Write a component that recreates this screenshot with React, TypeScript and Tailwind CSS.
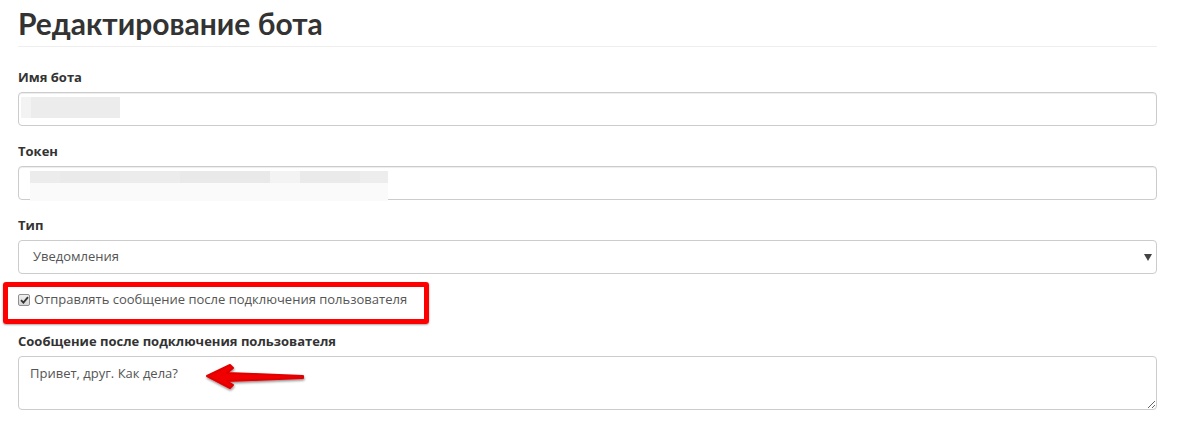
export default function App() {
  return (
    <div className="min-h-screen bg-white pl-[18px] pr-[21px] font-['Open_Sans',sans-serif] text-[#333]">
      {/* Header */}
      <h1 className="border-b border-[#eee] pt-[7px] pb-[6px] font-['Lato',sans-serif] text-[30px] font-bold leading-[33px] text-[#333]">
        Редактирование бота
      </h1>

      {/* Bot name */}
      <div className="mt-[20px] mb-[15px]">
        <label className="mb-[5px] block text-[13px] font-bold leading-[20px]">Имя бота</label>
        <div className="relative h-[34px] rounded-[4px] border border-[#ccc] shadow-[inset_0_1px_1px_rgba(0,0,0,0.075)]">
          <div className="absolute left-[2px] top-[4px] flex h-[21px]">
            <div className="w-[10px] bg-[#f3f3f3]"></div>
            <div className="w-[89px] bg-[#ececec]"></div>
          </div>
        </div>
      </div>

      {/* Token */}
      <div className="mb-[15px]">
        <label className="mb-[5px] block text-[13px] font-bold leading-[20px]">Токен</label>
        <div className="relative h-[34px] rounded-[4px] border border-[#ccc] shadow-[inset_0_1px_1px_rgba(0,0,0,0.075)]">
          <div className="absolute left-[11px] top-[4px] w-[358px]">
            <div className="flex h-[12px]">
              <div className="w-[30px] bg-[#ececec]"></div>
              <div className="w-[60px] bg-[#eaeaea]"></div>
              <div className="w-[60px] bg-[#ececec]"></div>
              <div className="w-[90px] bg-[#e9e9e9]"></div>
              <div className="w-[30px] bg-[#f3f3f3]"></div>
              <div className="w-[60px] bg-[#eaeaea]"></div>
              <div className="w-[28px] bg-[#ededed]"></div>
            </div>
            <div className="h-[18px] bg-[#fafafa]"></div>
          </div>
        </div>
      </div>

      {/* Type */}
      <div className="mb-[15px]">
        <label className="mb-[5px] block text-[13px] font-bold leading-[20px]">Тип</label>
        <div className="flex h-[34px] items-center justify-between rounded-[4px] border border-[#ccc] pl-[14px] pr-[4px] text-[13px] text-[#555]">
          <span>Уведомления</span>
          <svg width="8" height="7" viewBox="0 0 8 7" className="mt-[1px]">
            <polygon points="0,0 8,0 4,7" fill="#444" />
          </svg>
        </div>
      </div>

      {/* Checkbox with annotation box */}
      <div className="relative mb-[20px] flex h-[22px] items-center">
        <div className="pointer-events-none absolute left-[-15px] top-[-7px] h-[42px] w-[426px] rounded-[3px] border-[5px] border-[#ff0000] shadow-[0_1px_2px_rgba(0,0,0,0.35)]"></div>
        <span className="mr-[4px] flex h-[12px] w-[12px] items-center justify-center rounded-[2px] border border-[#8f8f8f] bg-gradient-to-b from-[#f0f0f0] to-[#d6d6d6]">
          <svg width="9" height="8" viewBox="0 0 9 8">
            <path d="M1 4.2 L3.4 6.6 L8 1.2" fill="none" stroke="#333" strokeWidth="1.8" />
          </svg>
        </span>
        <span className="text-[13px] text-[#555]">Отправлять сообщение после подключения пользователя</span>
      </div>

      {/* Message */}
      <div className="relative">
        <label className="mb-[5px] block text-[13px] font-bold leading-[20px]">Сообщение после подключения пользователя</label>
        <textarea
          readOnly
          defaultValue="Привет, друг. Как дела?"
          className="block h-[54px] w-full resize-y rounded-[4px] border border-[#ccc] px-[11px] py-[6px] text-[13px] leading-[20px] text-[#555] outline-none"
        />
        {/* Red arrow annotation */}
        <svg className="absolute left-[185px] top-[30px]" width="104" height="32" viewBox="0 0 104 32">
          <defs>
            <filter id="sh" x="-20%" y="-30%" width="140%" height="160%">
              <feDropShadow dx="0.5" dy="1.5" stdDeviation="1" floodColor="#000" floodOpacity="0.45" />
            </filter>
          </defs>
          <polygon
            points="4,15 27,4 30,7 24,12 100,15 100,17 24,20 30,24 27,27"
            fill="#f00000"
            stroke="#e00000"
            strokeLinejoin="round"
            strokeWidth="2"
            filter="url(#sh)"
          />
        </svg>
      </div>
    </div>
  );
}
